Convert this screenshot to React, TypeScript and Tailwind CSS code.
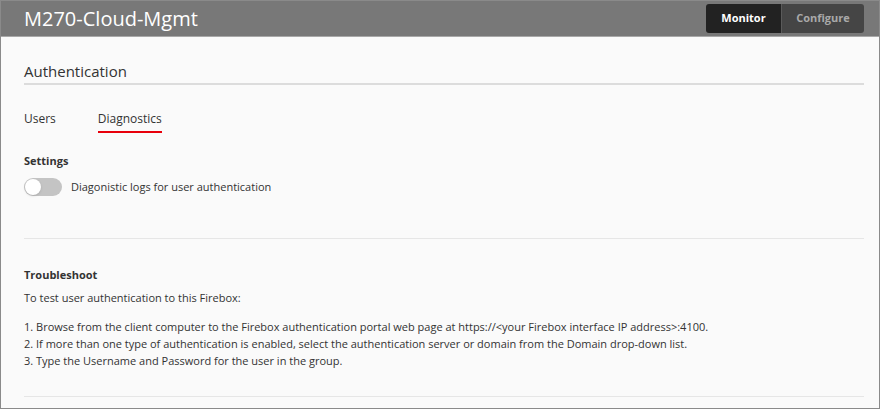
import React, { useState } from 'react';

// Firebox cloud management: Authentication > Diagnostics
export default function App() {
    const [enabled, setEnabled] = useState(false);

    return (
        <div
            className="w-[880px] h-[409px] border border-[#8a8a8a] bg-[#fafafa] flex flex-col overflow-hidden"
            style={{ fontFamily: '"Open Sans", "Liberation Sans", sans-serif' }}
        >
            <header className="h-[36px] bg-[#787878] border-b border-[#a8a8a8] flex items-center justify-between pl-[23px] pr-[15px] shrink-0">
                <h1 className="text-[20px] text-white leading-none">M270-Cloud-Mgmt</h1>
                <div className="flex h-[29px] rounded-[3px] overflow-hidden">
                    <button className="w-[75px] bg-[#222222] text-white text-[11px] font-bold">Monitor</button>
                    <button className="w-[83px] bg-[#454545] text-[#a9a9a9] text-[11px] font-bold border-l border-[#5a5a5a]">Configure</button>
                </div>
            </header>

            <main className="flex-1 pl-[23px] pr-[15px] pt-[25px] text-[#333333]">
                <h2 className="text-[15px] leading-[18px] pb-[3px] border-b-2 border-[#dcdcdc]">Authentication</h2>

                <nav className="flex gap-[42px] mt-[25px] text-[12px] leading-[18px]">
                    <span className="pb-[3px]">Users</span>
                    <span className="pb-[3px] border-b-2 border-[#e8000b]">Diagnostics</span>
                </nav>

                <section className="mt-[19px] text-[11px] leading-[18px]">
                    <h3 className="font-bold">Settings</h3>
                    <label className="flex items-center gap-[9px] mt-[8px]">
                        <button
                            onClick={() => setEnabled(!enabled)}
                            className={`relative w-[38px] h-[18px] rounded-full ${enabled ? 'bg-[#5a8c5c]' : 'bg-[#c4c4c4]'}`}
                        >
                            <span
                                className={`absolute top-[1px] w-[16px] h-[16px] rounded-full bg-white shadow-sm ${enabled ? 'left-[21px]' : 'left-[1px]'}`}
                            />
                        </button>
                        Diagonistic logs for user authentication
                    </label>
                </section>

                <hr className="mt-[42px] border-t border-[#e6e6e6]" />

                <section className="pt-[27px] pb-[27px] text-[11px] leading-[18px] border-b border-[#e6e6e6]">
                    <h3 className="font-bold">Troubleshoot</h3>
                    <p className="mt-[5px]">To test user authentication to this Firebox:</p>
                    <ol className="mt-[11px] leading-[17px]">
                        <li>1. Browse from the client computer to the Firebox authentication portal web page at https://&lt;your Firebox interface IP address&gt;:4100.</li>
                        <li>2. If more than one type of authentication is enabled, select the authentication server or domain from the Domain drop-down list.</li>
                        <li>3. Type the Username and Password for the user in the group.</li>
                    </ol>
                </section>
            </main>
        </div>
    );
}
